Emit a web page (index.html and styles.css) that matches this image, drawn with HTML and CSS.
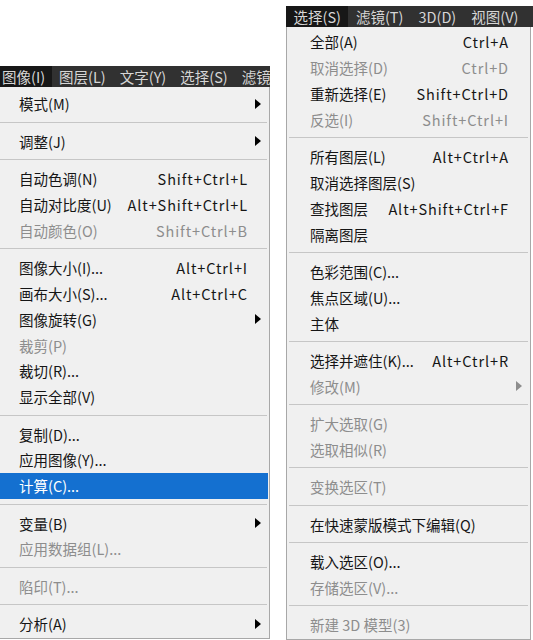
FILE: index.html
```html
<!DOCTYPE html>
<html>
    <head>
        <meta charset="utf-8">
        <title>Menus</title>
        <meta name="viewport" content="width=device-width, initial-scale=1">
        <link rel="stylesheet" href="styles.css">
    </head>
    <body>
        <div class="screen">
            <div class="menu menuImage">
                <div class="menubar">
                    <span class="title active">图像(I)</span>
                    <span class="title">图层(L)</span>
                    <span class="title">文字(Y)</span>
                    <span class="title">选择(S)</span>
                    <span class="title">滤镜</span>
                </div>
                <div class="dropdown dropImage">
                    <div class="item"><span class="label">模式(M)</span><span class="key"></span><span class="arrow"></span></div>
                    <div class="sep"></div>
                    <div class="item"><span class="label">调整(J)</span><span class="key"></span><span class="arrow"></span></div>
                    <div class="sep"></div>
                    <div class="item"><span class="label">自动色调(N)</span><span class="key">Shift+Ctrl+L</span></div>
                    <div class="item"><span class="label">自动对比度(U)</span><span class="key">Alt+Shift+Ctrl+L</span></div>
                    <div class="item disabled"><span class="label">自动颜色(O)</span><span class="key">Shift+Ctrl+B</span></div>
                    <div class="sep"></div>
                    <div class="item"><span class="label">图像大小(I)...</span><span class="key">Alt+Ctrl+I</span></div>
                    <div class="item"><span class="label">画布大小(S)...</span><span class="key">Alt+Ctrl+C</span></div>
                    <div class="item"><span class="label">图像旋转(G)</span><span class="key"></span><span class="arrow"></span></div>
                    <div class="item disabled"><span class="label">裁剪(P)</span></div>
                    <div class="item"><span class="label">裁切(R)...</span></div>
                    <div class="item"><span class="label">显示全部(V)</span></div>
                    <div class="sep"></div>
                    <div class="item"><span class="label">复制(D)...</span></div>
                    <div class="item"><span class="label">应用图像(Y)...</span></div>
                    <div class="item active"><span class="label">计算(C)...</span></div>
                    <div class="sep"></div>
                    <div class="item"><span class="label">变量(B)</span><span class="key"></span><span class="arrow"></span></div>
                    <div class="item disabled"><span class="label">应用数据组(L)...</span></div>
                    <div class="sep"></div>
                    <div class="item disabled"><span class="label">陷印(T)...</span></div>
                    <div class="sep"></div>
                    <div class="item"><span class="label">分析(A)</span><span class="key"></span><span class="arrow"></span></div>
                </div>
            </div>

            <div class="menu menuSelect">
                <div class="menubar">
                    <span class="title active">选择(S)</span>
                    <span class="title">滤镜(T)</span>
                    <span class="title">3D(D)</span>
                    <span class="title">视图(V)</span>
                </div>
                <div class="dropdown dropSelect">
                    <div class="item"><span class="label">全部(A)</span><span class="key">Ctrl+A</span></div>
                    <div class="item disabled"><span class="label">取消选择(D)</span><span class="key">Ctrl+D</span></div>
                    <div class="item"><span class="label">重新选择(E)</span><span class="key">Shift+Ctrl+D</span></div>
                    <div class="item disabled"><span class="label">反选(I)</span><span class="key">Shift+Ctrl+I</span></div>
                    <div class="sep"></div>
                    <div class="item"><span class="label">所有图层(L)</span><span class="key">Alt+Ctrl+A</span></div>
                    <div class="item"><span class="label">取消选择图层(S)</span></div>
                    <div class="item"><span class="label">查找图层</span><span class="key">Alt+Shift+Ctrl+F</span></div>
                    <div class="item"><span class="label">隔离图层</span></div>
                    <div class="sep"></div>
                    <div class="item"><span class="label">色彩范围(C)...</span></div>
                    <div class="item"><span class="label">焦点区域(U)...</span></div>
                    <div class="item"><span class="label">主体</span></div>
                    <div class="sep"></div>
                    <div class="item"><span class="label">选择并遮住(K)...</span><span class="key">Alt+Ctrl+R</span></div>
                    <div class="item disabled"><span class="label">修改(M)</span><span class="key"></span><span class="arrow"></span></div>
                    <div class="sep"></div>
                    <div class="item disabled"><span class="label">扩大选取(G)</span></div>
                    <div class="item disabled"><span class="label">选取相似(R)</span></div>
                    <div class="sep"></div>
                    <div class="item disabled"><span class="label">变换选区(T)</span></div>
                    <div class="sep"></div>
                    <div class="item"><span class="label">在快速蒙版模式下编辑(Q)</span></div>
                    <div class="sep"></div>
                    <div class="item"><span class="label">载入选区(O)...</span></div>
                    <div class="item disabled"><span class="label">存储选区(V)...</span></div>
                    <div class="sep"></div>
                    <div class="item disabled"><span class="label">新建 3D 模型(3)</span></div>
                </div>
            </div>
        </div>
    </body>
</html>
```

FILE: styles.css
```css
* {
    margin: 0;
    padding: 0;
    box-sizing: border-box;
}

body {
    background-color: #ffffff;
    font-family: "Noto Sans CJK SC", "Noto Sans", sans-serif;
    font-size: 14.5px;
    color: #151515;
    overflow: hidden;
}

.screen {
    width: 533px;
    height: 640px;
    display: flex;
    flex-flow: row nowrap;
    align-items: flex-start;
}

.menu {
    display: flex;
    flex-flow: column nowrap;
}
.menuImage {
    width: 275px;
    margin-left: -5px;
    margin-top: 66px;
}
.menuSelect {
    width: 247px;
    margin-left: 16px;
    margin-top: 6px;
}

.menubar {
    height: 21px;
    line-height: 21px;
    display: flex;
    flex-flow: row nowrap;
    white-space: nowrap;
    overflow: hidden;
    background-color: #313131;
    color: #d6d6d6;
}
.title {
    padding: 0 7px;
}
.title.active {
    background-color: #171717;
}
.menuSelect .title {
    padding: 0 7.5px;
}

.dropdown {
    background-color: #f0f0f0;
    border: 1px solid #a8a8a8;
    border-top: none;
    padding-bottom: 1px;
}
.dropImage {
    width: 275px;
    padding-top: 4px;
}
.dropSelect {
    width: 245px;
    padding-top: 2px;
}

.item {
    height: 25.8px;
    display: grid;
    grid-template-columns: 1fr auto 22px;
    align-items: center;
    padding-left: 23px;
    white-space: nowrap;
}
.key {
    letter-spacing: 0.9px;
    margin-right: -1px;
}
.arrow {
    grid-column: 3;
    justify-self: end;
    margin-right: 8px;
    width: 0;
    height: 0;
    border-left: 6px solid #000;
    border-top: 5px solid transparent;
    border-bottom: 5px solid transparent;
}

.disabled {
    color: #8d8d8d;
}
.disabled .arrow {
    border-left-color: #8d8d8d;
}

.item.active {
    background-color: #1470d0;
    color: #ffffff;
    margin-right: 1px;
}

.sep {
    height: 1px;
    margin: 5px 2px 5.6px 2px;
    background-color: #c6c6c6;
}
```
